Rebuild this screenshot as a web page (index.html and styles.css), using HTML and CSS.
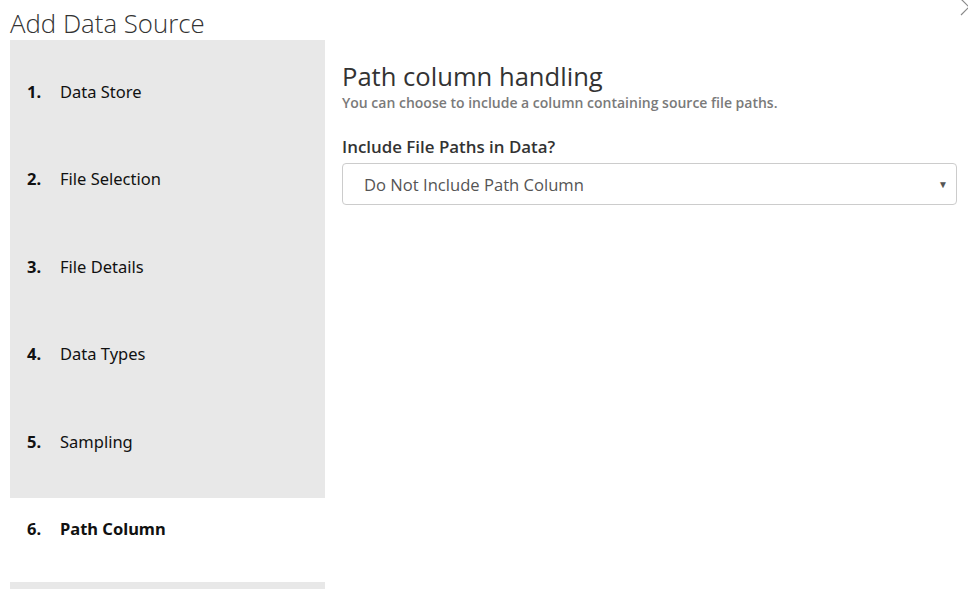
FILE: index.html
```html
<!DOCTYPE html>
<html>
<head>
<meta charset="utf-8">
<link rel="stylesheet" href="styles.css">
</head>
<body>
<div class="dialog">
  <h1 class="title">Add Data Source</h1>
  <svg class="close" width="20" height="20" viewBox="0 0 20 20"><path d="M2 1 L18 17 M18 1 L2 17" stroke="#8a8a8a" stroke-width="1.2" fill="none"/></svg>
  <div class="body">
    <nav class="steps">
      <div class="step"><span class="num">1.</span><span class="label">Data Store</span></div>
      <div class="step"><span class="num">2.</span><span class="label">File Selection</span></div>
      <div class="step"><span class="num">3.</span><span class="label">File Details</span></div>
      <div class="step"><span class="num">4.</span><span class="label">Data Types</span></div>
      <div class="step"><span class="num">5.</span><span class="label">Sampling</span></div>
      <div class="step active"><span class="num">6.</span><span class="label">Path Column</span></div>
    </nav>
    <main class="content">
      <h2 class="heading">Path column handling</h2>
      <p class="sub">You can choose to include a column containing source file paths.</p>
      <label class="field-label">Include File Paths in Data?</label>
      <div class="select"><span class="select-text">Do Not Include Path Column</span><span class="caret">&#9660;</span></div>
    </main>
  </div>
</div>
</body>
</html>
```
FILE: styles.css
```css
html, body { margin: 0; padding: 0; background: #fff; overflow: hidden; }
body { font-family: "Open Sans", "Noto Sans", sans-serif; color: #222; }
.dialog { position: relative; width: 968px; height: 589px; overflow: hidden; padding: 0 0 0 10px; box-sizing: border-box; }
.title { margin: 0; height: 40px; font-weight: 300; font-size: 25.8px; line-height: 46px; color: #333; }
.close { position: absolute; top: -2px; right: -11px; }
.body { display: flex; gap: 17px; }
.steps { width: 315px; flex: none; background: #e8e8e8; padding-top: 21px; height: 600px; display: flex; flex-direction: column; gap: 3.45px; }
.step { height: 84px; flex: none; box-sizing: border-box; padding: 20px 0 0 17px; display: flex; align-items: baseline; font-family: "Noto Sans", "Open Sans", sans-serif; font-size: 16.5px; color: #111; line-height: 22px; }
.step .num { font-weight: 700; width: 33px; }
.step.active { background: #fff; }
.step.active .label { font-weight: 700; }
.content { flex: 1; padding-top: 21px; padding-right: 11px; }
.heading { margin: 0; font-weight: 400; font-size: 25.6px; line-height: 32px; color: #333; }
.sub { margin: 0; font-size: 14px; font-weight: 600; color: #7a7a7a; line-height: 20px; }
.field-label { display: block; margin-top: 23px; font-weight: 600; font-size: 16.9px; line-height: 22px; color: #333; }
.select { margin-top: 5px; height: 42px; box-sizing: border-box; border: 1px solid #ccc; border-radius: 4px; display: flex; align-items: center; justify-content: space-between; padding: 0 8px 0 21px; }
.select-text { font-size: 16.6px; color: #555; }
.caret { font-size: 10px; color: #555; }
```
